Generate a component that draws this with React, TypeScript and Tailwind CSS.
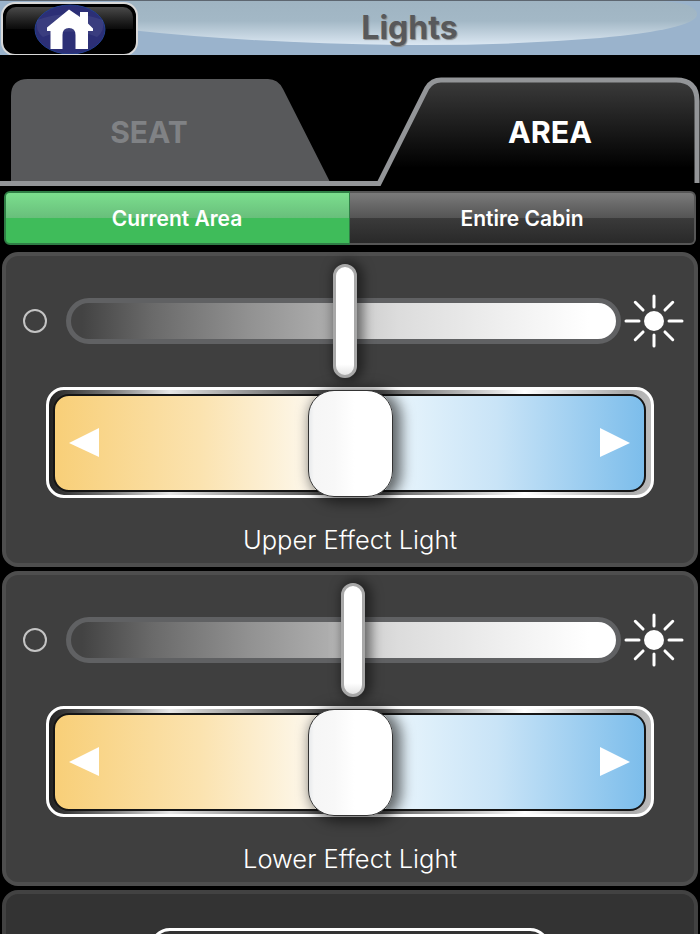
const FONT = "font-['Inter','Liberation_Sans',sans-serif]";

function HomeButton() {
  return (
    <div className="relative w-[137px] h-[54px] ml-px mt-px rounded-[14px] border-2 border-[#d9d9d9] bg-black overflow-hidden shrink-0">
      <div className="absolute left-[3px] right-[3px] top-[3px] h-[22px] rounded-t-[10px] bg-gradient-to-b from-[#4a4a4a] to-[#0a0a0a]" />
      <svg className="absolute left-0 top-0" width="133" height="50" viewBox="0 0 133 50">
        <ellipse cx="67" cy="25.5" rx="35" ry="24.5" fill="#2c2f76" stroke="#23408f" strokeWidth="1" />
        <path d="M34 16 Q67 4 100 16 Q102 27 94 33 Q67 22 40 33 Q32 27 34 16Z" fill="#ffffff" opacity="0.07" />
        <path
          fillRule="evenodd"
          d="M66 5.5 L77 13 V8 H85 V19.5 L90 24.5 V27 H85 V45 H72.500 V31 Q72.500 24 66 24 Q59.500 24 59.500 31 V45 H47.500 V27 H44 V23.500 Z"
          fill="#ffffff"
        />
      </svg>
    </div>
  );
}

function Header() {
  return (
    <div className="relative h-[55px] bg-[#9ab3cc] border-t border-[#5d6670] flex overflow-hidden">
      <svg className="absolute left-0 top-0" width="700" height="54" viewBox="0 0 700 54">
        <defs>
          <linearGradient id="gloss" x1="0" y1="0" x2="0" y2="1">
            <stop offset="0" stopColor="#9fb4c2" />
            <stop offset="0.45" stopColor="#a3b8c6" />
            <stop offset="1" stopColor="#dbe7f2" />
          </linearGradient>
        </defs>
        <path d="M130 0 H660 Q698 2 697 14 Q694 28 600 37 Q500 45 400 44 Q250 42 130 29 Z" fill="url(#gloss)" />
      </svg>
      <HomeButton />
      <div className={`relative flex-1 ${FONT}`}>
        <div className="absolute left-[223px] top-[9px] w-[97px] text-center text-[32px] leading-[36px] font-bold text-[#58595b] [text-shadow:1px_1px_1px_#8a8a8a]">
          Lights
        </div>
      </div>
    </div>
  );
}

function Tabs() {
  return (
    <div className={`relative h-[136px] bg-black ${FONT}`}>
      <svg className="absolute left-0 top-0" width="700" height="136" viewBox="0 55 700 136">
        <defs>
          <linearGradient id="areaFill" x1="0" y1="0" x2="0" y2="1">
            <stop offset="0" stopColor="#3b3b3b" />
            <stop offset="0.85" stopColor="#000000" />
          </linearGradient>
        </defs>
        <path d="M11 182 V96 Q11 79 28 79 H268 Q278 79 283 89 L330 182 Z" fill="#58595b" />
        <path d="M0 183.500 H379 L427 88 Q432 80 441 80 H676 Q697 80 697 101 V183" fill="url(#areaFill)" stroke="#939598" strokeWidth="5" />
        <rect x="0" y="181" width="378" height="5" fill="#939598" />
      </svg>
      <div className="relative flex justify-between pt-[59px]">
        <div className="w-[298px] text-center text-[30px] leading-[36px] font-bold text-[#808285]">SEAT</div>
        <div className="w-[300px] text-center text-[30.5px] leading-[36px] font-bold text-white">AREA</div>
      </div>
    </div>
  );
}

function Segments() {
  return (
    <div className={`flex mx-1 h-[54px] text-[21px] font-semibold text-white ${FONT}`}>
      <div className="relative w-[346px] rounded-l-[6px] border-2 border-r border-[#2f7d45] overflow-hidden flex items-center justify-center pt-[2px] pr-[1px] bg-[#3fbc5a]">
        <div className="absolute inset-x-0 top-0 h-[25px] bg-gradient-to-b from-[#7cde8e] to-[#68bf7b]" />
        <span className="relative">Current Area</span>
      </div>
      <div className="relative flex-1 rounded-r-[6px] border-2 border-l-0 border-[#565656] overflow-hidden flex items-center justify-center pt-[2px] bg-gradient-to-b from-[#4d4d4d] to-[#292929]">
        <div className="absolute inset-x-0 top-0 h-[25px] bg-gradient-to-b from-[#7b7b7b] to-[#545454]" />
        <span className="relative">Entire Cabin</span>
      </div>
    </div>
  );
}

function Sun() {
  const rays = [
    { r: 0, a: 14, b: 25 },
    { r: 45, a: 15.5, b: 26.5 },
    { r: 90, a: 15, b: 28 },
    { r: 135, a: 15.5, b: 26.5 },
    { r: 180, a: 14, b: 25 },
    { r: 225, a: 15.5, b: 26.5 },
    { r: 270, a: 15, b: 28 },
    { r: 315, a: 15.5, b: 26.5 },
  ];
  return (
    <svg width="60" height="60" viewBox="-30 -30 60 60" className="shrink-0">
      <circle r="10" fill="#ffffff" />
      {rays.map((ray) => (
        <line
          key={ray.r}
          x1="0"
          y1={-ray.a}
          x2="0"
          y2={-ray.b}
          stroke="#ffffff"
          strokeWidth="3"
          strokeLinecap="round"
          transform={`rotate(${ray.r})`}
        />
      ))}
    </svg>
  );
}

function Dimmer({ thumbClass }: { thumbClass: string }) {
  return (
    <div className="flex items-center h-[114px] pl-[17px]">
      <div className="w-6 h-6 rounded-full border-2 border-[#c4c4c4] shrink-0" />
      <div className="relative ml-[19px] w-[555px] h-[46px] rounded-[23px] border-[5px] border-[#606163] bg-[linear-gradient(90deg,#434343_2%,#6a6a6a_15%,#929292_33%,#adadad_47%,#c8c8c8_50%,#dcdcdc_60%,#eeeeee_78%,#ffffff_95%)]">
        <div
          className={`absolute top-[-39px] w-[24px] h-[114px] rounded-[12px] border-[3px] border-[#a8a8a8] bg-[linear-gradient(180deg,#ffffff_90%,#e4e4e4_100%)] shadow-[3px_0_12px_3px_rgba(0,0,0,0.5)] ${thumbClass}`}
        />
      </div>
      <div className="ml-[3px]">
        <Sun />
      </div>
    </div>
  );
}

function Balance() {
  return (
    <div className="relative mt-[9px] ml-10 w-[608px] h-[111px] rounded-[18px] border-[3px] border-white bg-[linear-gradient(90deg,#222222_0%,#777777_10%,#e6e6e6_20%,#777777_38%,#333333_50%,#888888_62%,#ffffff_79%,#a8a8a8_96%,#bcbcbc_100%)]">
      <div className="absolute left-[4px] top-[4px] w-[593px] h-[98px] rounded-[16px] border-2 border-[#151515] bg-[linear-gradient(90deg,#f8cf78_0%,#fbe3b0_25%,#fdf7ea_43%,#fdf7ea_50%,#e9f5fc_57%,#c9e4f7_75%,#7cbdeb_100%)] flex items-center justify-between pl-[14px] pr-[14px]">
        <svg width="30" height="30" viewBox="0 0 30 30">
          <polygon points="0,15 30,0 30,29" fill="#ffffff" />
        </svg>
        <svg width="30" height="30" viewBox="0 0 30 30">
          <polygon points="30,15 0,0 0,29" fill="#ffffff" />
        </svg>
      </div>
      <div className="absolute left-[259px] top-0 w-[85px] h-[107px] rounded-[26px] border-[1.5px] border-[#333333] bg-[linear-gradient(90deg,#e8eaec_0%,#f6f6f6_6%,#f8f8f8_30%,#ffffff_55%)] shadow-[5px_2px_14px_3px_rgba(0,0,0,0.6)]" />
    </div>
  );
}

function Panel({ label, thumbClass }: { label: string; thumbClass: string }) {
  return (
    <div className={`mx-0.5 h-[315px] rounded-[16px] border-4 border-[#4e4e4e] bg-[#3f3f3f] pt-2 ${FONT}`}>
      <Dimmer thumbClass={thumbClass} />
      <Balance />
      <div className="mt-[27px] text-center text-[25.5px] leading-[30px] font-light text-white">{label}</div>
    </div>
  );
}

export default function App() {
  return (
    <div className="w-[700px] h-[934px] bg-black overflow-hidden">
      <Header />
      <Tabs />
      <Segments />
      <div className="mt-[7px] flex flex-col gap-1">
        <Panel label="Upper Effect Light" thumbClass="left-[262px]" />
        <Panel label="Lower Effect Light" thumbClass="left-[270px]" />
        <div className="mx-0.5 h-[200px] rounded-[16px] border-4 border-[#424242] bg-[#333333] pt-[34px]">
          <div className="ml-[144px] w-[400px] h-[60px] rounded-[20px] border-[3px] border-white" />
        </div>
      </div>
    </div>
  );
}
